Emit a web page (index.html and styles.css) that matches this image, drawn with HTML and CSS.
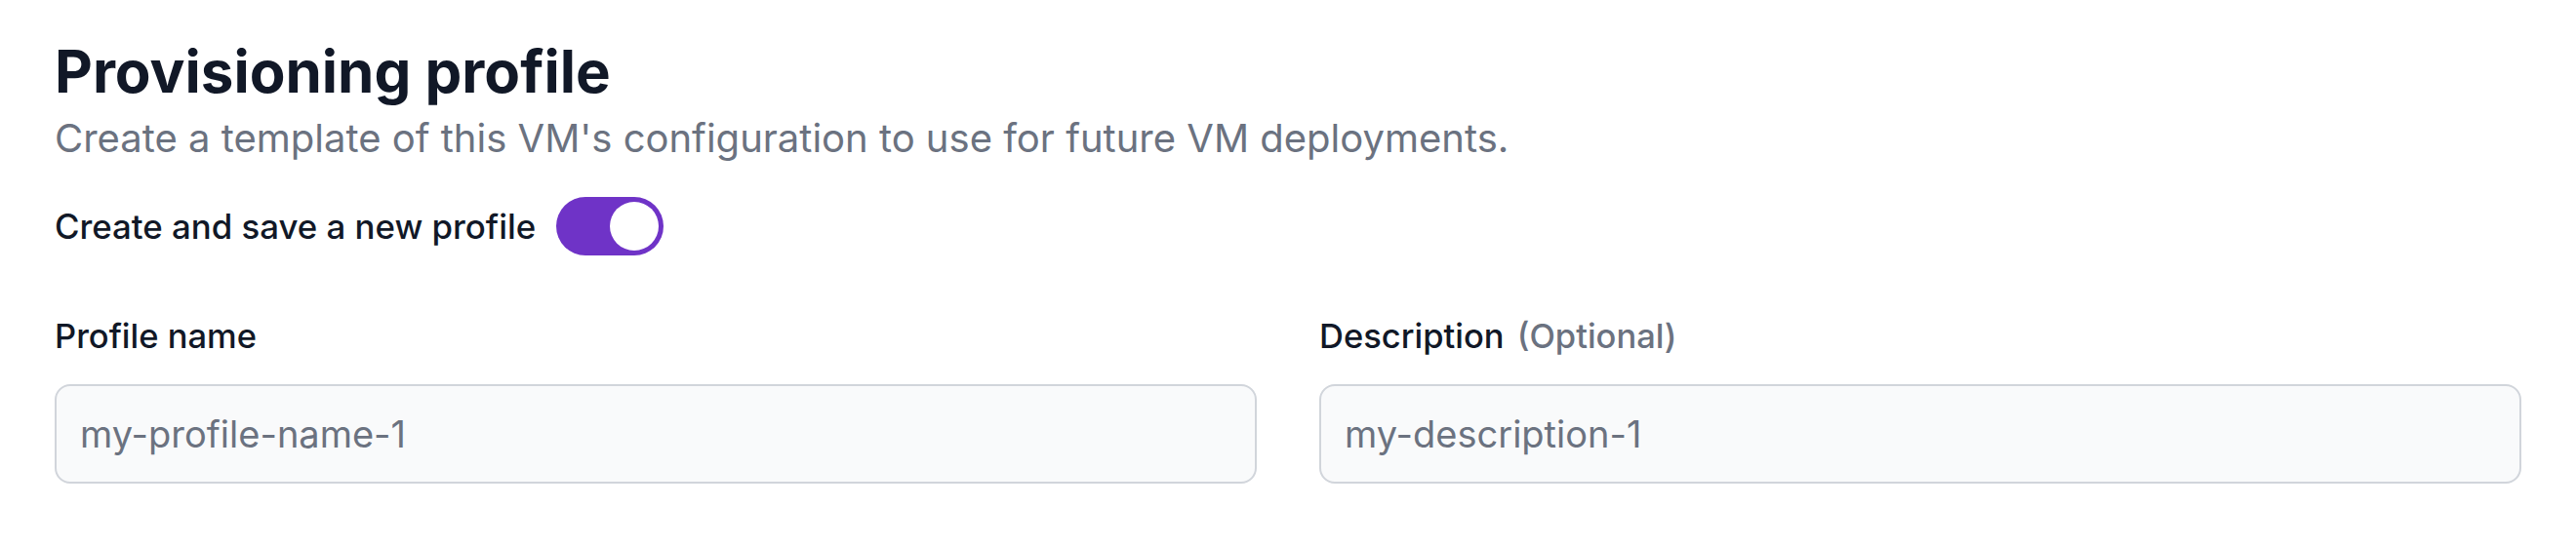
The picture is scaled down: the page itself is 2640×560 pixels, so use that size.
FILE: index.html
```
<!DOCTYPE html>
<html lang="en">
<head>
<meta charset="utf-8">
<title>Provisioning profile</title>
<link rel="stylesheet" href="styles.css">
</head>
<body>
<main class="page">
  <h1 class="title">Provisioning profile</h1>
  <p class="subtitle">Create a template of this VM's configuration to use for future VM deployments.</p>
  <div class="toggle-row">
    <span class="toggle-label">Create and save a new profile</span>
    <span class="toggle" role="switch" aria-checked="true"><span class="knob"></span></span>
  </div>
  <div class="fields">
    <div class="field">
      <label class="field-label">Profile name</label>
      <input class="field-input" type="text" value="my-profile-name-1">
    </div>
    <div class="field">
      <label class="field-label">Description <span class="optional">(Optional)</span></label>
      <input class="field-input" type="text" value="my-description-1">
    </div>
  </div>
</main>
</body>
</html>
```

FILE: styles.css
```
html, body {
  margin: 0;
  padding: 0;
  background: #ffffff;
}
body {
  font-family: Inter, "Noto Sans", "Liberation Sans", sans-serif;
  color: #111827;
}
.page {
  padding: 37px 56px 0 56px;
}
.title {
  margin: 0;
  font-size: 60px;
  line-height: 72px;
  font-weight: 700;
  color: #111827;
}
.subtitle {
  margin: 5px 0 0 0;
  font-size: 40px;
  line-height: 56px;
  font-weight: 400;
  color: #6b7280;
}
.toggle-row {
  margin-top: 32px;
  display: flex;
  align-items: center;
  gap: 21px;
}
.toggle-label {
  font-size: 34.8px;
  line-height: 48px;
  font-weight: 500;
  color: #111827;
}
.toggle {
  box-sizing: border-box;
  width: 110px;
  height: 60px;
  border-radius: 30px;
  background: #6f33c7;
  padding: 5px;
  display: flex;
  justify-content: flex-end;
}
.knob {
  width: 50px;
  height: 50px;
  border-radius: 50%;
  background: #ffffff;
}
.fields {
  margin-top: 59px;
  display: grid;
  grid-template-columns: 1fr 1fr;
  gap: 64px;
}
.field {
  display: flex;
  flex-direction: column;
}
.field-label {
  font-size: 34.5px;
  line-height: 48px;
  font-weight: 500;
  color: #111827;
}
.optional {
  margin-left: 4px;
  color: #6b7280;
}
.field-input {
  margin-top: 25px;
  box-sizing: border-box;
  height: 102px;
  width: 100%;
  border: 2px solid #d1d5db;
  border-radius: 16px;
  background: #f9fafb;
  padding: 0 24px;
  font-family: Inter, "Noto Sans", "Liberation Sans", sans-serif;
  font-size: 38px;
  line-height: 56px;
  color: #6b7280;
  outline: none;
}
```
